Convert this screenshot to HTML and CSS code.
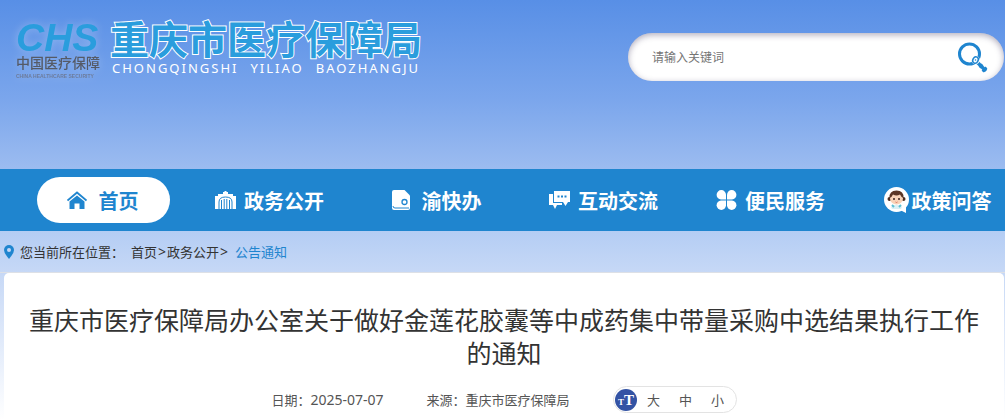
FILE: index.html
```html
<!DOCTYPE html>
<html lang="zh-CN">
<head>
    <meta charset="UTF-8">
    <meta name="viewport" content="width=device-width, initial-scale=1.0">
    <title>重庆市医疗保障局</title>
    <link rel="stylesheet" href="styles.css">
</head>
<body>
    <header class="header">
        <a class="logo" href="#">
            <span class="emblem">
                <span class="emblem-chs">CHS</span>
                <span class="emblem-cn">中国医疗保障</span>
                <span class="emblem-en">CHINA HEALTHCARE SECURITY</span>
            </span>
            <span class="site-name">
                <span class="site-cn">重庆市医疗保障局</span>
                <span class="site-en"><span>CHONGQINGSHI</span><span>YILIAO</span><span>BAOZHANGJU</span></span>
            </span>
        </a>
        <form class="search">
            <input class="search-input" type="text" placeholder="请输入关键词" aria-label="请输入关键词">
            <button class="search-btn" type="button" aria-label="搜索">
                <svg width="30" height="31" viewBox="0 0 30 31">
                    <circle cx="11.500" cy="12" r="10" fill="none" stroke="#1f85cf" stroke-width="3"/>
                    <path d="M19 20 L28 29" stroke="#1f85cf" stroke-width="3.500"/>
                    <path d="M21.500 25.500 l3 -3 M24.500 29.500 l4 -4" stroke="#1f85cf" stroke-width="2.500"/>
                    <circle cx="17.500" cy="18" r="4.300" fill="#fff"/>
                    <ellipse cx="17.500" cy="18" rx="2.600" ry="3.300" transform="rotate(30 17.500 18)" fill="#fff" stroke="#1f85cf" stroke-width="1.500"/>
                    <circle cx="17.500" cy="18" r="0.800" fill="#1f85cf"/>
                </svg>
            </button>
        </form>
    </header>

    <nav class="nav">
        <a class="nav-item active" href="#">
            <svg width="20" height="18" viewBox="0 0 20 18">
                <path d="M0.500 9.500 L10 1.500 L19.500 9.500" fill="none" stroke="currentColor" stroke-width="1.800"/>
                <path d="M2.500 10.500 L10 4.500 L17.500 10.500 V18 H12.500 V12.500 H7.500 V18 H2.500 Z" fill="currentColor"/>
            </svg>
            <span>首页</span>
        </a>
        <a class="nav-item" href="#">
            <svg width="21" height="18" viewBox="0 0 21 18">
                <path d="M0 5 H3 V3 H8 V1 H9.500 V0 H11.500 V1 H13 V3 H18 V5 H21 V18 H0 Z" fill="currentColor"/>
                <path d="M4 18 V11 Q4 6 10.500 6 Q17 6 17 11 V18" fill="none" stroke="#1f85cf"/>
                <path d="M6.500 18 V9 M9.200 18 V8 M11.800 18 V8 M14.500 18 V9" stroke="#1f85cf"/>
            </svg>
            <span>政务公开</span>
        </a>
        <a class="nav-item wide" href="#">
            <svg width="18" height="20" viewBox="0 0 18 20">
                <path d="M2 0 H12.500 L18 5.500 V18 Q18 20 16 20 H2 Q0 20 0 18 V2 Q0 0 2 0 Z" fill="currentColor"/>
                <path d="M1 16 Q1 18 3 18 H17" fill="none" stroke="#1f85cf"/>
                <circle cx="12.500" cy="12" r="2.500" fill="none" stroke="#1f85cf" stroke-width="1.300"/>
            </svg>
            <span>渝快办</span>
        </a>
        <a class="nav-item" href="#">
            <svg width="21" height="18" viewBox="0 0 21 18">
                <path d="M0 3 H4 V12 H13 V14 H8 L6 18 L4 14 H0 Z" fill="currentColor"/>
                <path d="M5 0 H21 V11 H19 L16.500 15 L14 11 H5 Z" fill="currentColor"/>
                <path d="M8.500 5.500 H10.500 M12 5.500 H14 M15.500 5.500 H17.500" stroke="#1f85cf" stroke-width="2"/>
            </svg>
            <span>互动交流</span>
        </a>
        <a class="nav-item" href="#">
            <svg width="21" height="20" viewBox="0 0 21 20" fill="currentColor">
                <path d="M10 9.500 H5 A4.700 4.700 0 1 1 10 4.700 Z"/>
                <path d="M11 9.500 H16 A4.700 4.700 0 1 0 11 4.700 Z"/>
                <path d="M10 10.500 H5 A4.700 4.700 0 1 0 10 15.300 Z"/>
                <path d="M11 10.500 H16 A4.700 4.700 0 1 1 11 15.300 Z"/>
            </svg>
            <span>便民服务</span>
        </a>
        <a class="nav-item tight" href="#">
            <svg width="25" height="26" viewBox="0 0 25 26">
                <circle cx="12.500" cy="12.500" r="12.500" fill="#fff"/>
                <path d="M16 23 L22 26 L22 19 Z" fill="#fff"/>
                <path d="M7 20 Q12.500 15 18 20 L17 22 H8 Z" fill="#d9f0f5"/>
                <path d="M8 18 L10 20 M17 18 L15 20" stroke="#5dbfd3" stroke-width="2"/>
                <circle cx="5.500" cy="12" r="2" fill="#4a2d20"/>
                <circle cx="19.500" cy="12" r="2" fill="#4a2d20"/>
                <ellipse cx="12.500" cy="11.500" rx="6.500" ry="6" fill="#f8d3b8"/>
                <path d="M5.500 11 Q5 3.500 12.500 3.500 Q20 3.500 19.500 11 Q17 10 16 7.500 Q12.500 9.500 9 7.500 Q8 10 5.500 11 Z" fill="#5a3524"/>
                <circle cx="10" cy="12" r="1" fill="#3a221c"/>
                <circle cx="15" cy="12" r="1" fill="#3a221c"/>
                <path d="M11.500 15 Q12.500 16 13.500 15" fill="none" stroke="#d8705e"/>
            </svg>
            <span>政策问答</span>
        </a>
    </nav>

    <div class="breadcrumb">
        <svg width="10" height="14" viewBox="0 0 10 14">
            <path d="M5 14 Q0 8 0 5 A5 5 0 0 1 10 5 Q10 8 5 14 Z" fill="#1f85cf"/>
            <circle cx="5" cy="5" r="2" fill="#c5d7f6"/>
        </svg>
        <span class="breadcrumb-label">您当前所在位置：</span>
        <span class="breadcrumb-path"><a href="#">首页</a><i>&gt;</i><a href="#">政务公开</a><i>&gt;</i></span>
        <a class="current" href="#">公告通知</a>
    </div>

    <main class="article">
        <h1>重庆市医疗保障局办公室关于做好金莲花胶囊等中成药集中带量采购中选结果执行工作的通知</h1>
        <div class="meta">
            <span>日期：<time>2025-07-07</time></span>
            <span>来源：重庆市医疗保障局</span>
            <div class="font-size">
                <svg width="22" height="22" viewBox="0 0 22 22">
                    <circle cx="11" cy="11" r="11" fill="#3353a4"/>
                    <text class="icon-t" x="3" y="16" font-size="9">T</text>
                    <text class="icon-t" x="9" y="16" font-size="15">T</text>
                </svg>
                <button type="button">大</button>
                <button type="button">中</button>
                <button type="button">小</button>
            </div>
        </div>
    </main>
</body>
</html>
```

FILE: styles.css
```css
* {
    box-sizing: border-box;
}
body {
    margin: 0;
    min-height: 100vh;
    display: flex;
    flex-direction: column;
    font-family: "Noto Sans", "Noto Sans CJK SC", sans-serif;
    font-size: 13px;
    color: #333;
    background: linear-gradient(#588fe6 0, #7ba6ec 100px, #9cbcf0 169px, #b4cdf4 231px, #c6d8f6 272px, #ffffff 420px);
}
a {
    color: inherit;
    text-decoration: none;
}
.header {
    display: flex;
    justify-content: space-between;
    align-items: flex-start;
    height: 169px;
    padding-left: 16px;
    padding-right: 1px;
}
.logo {
    display: flex;
    gap: 8px;
    padding-top: 16px;
}
.emblem {
    display: flex;
    flex-direction: column;
    width: 86px;
    padding-top: 6px;
    white-space: nowrap;
    filter: drop-shadow(0 0 4px rgba(255, 255, 255, 0.3));
}
.emblem-chs {
    font: italic bold 39px/31px "Liberation Sans", sans-serif;
    color: #2a9ddd;
}
.emblem-cn {
    font-size: 14px;
    font-weight: 500;
    line-height: 20px;
    color: #555a66;
}
.emblem-en {
    font: bold 5px/6px "Liberation Sans", sans-serif;
    color: #6d7c9c;
}
.site-name {
    display: flex;
    flex-direction: column;
}
.site-cn {
    font-size: 39px;
    font-weight: bold;
    line-height: 45px;
    color: #2a9ddd;
    -webkit-text-stroke: 2px #fff;
    paint-order: stroke fill;
}
.site-en {
    display: flex;
    justify-content: space-between;
    padding: 0 2px;
    font-size: 13px;
    line-height: 14px;
    letter-spacing: 2px;
    color: #fff;
}
.search {
    display: flex;
    align-items: center;
    width: 376px;
    height: 48px;
    margin-top: 33px;
    padding: 0 16px 0 24px;
    border-radius: 24px;
    background: #fff;
    box-shadow: inset 0 2px 6px rgba(60, 50, 90, 0.4);
}
.search-input {
    flex: 1;
    min-width: 0;
    padding: 0;
    border: none;
    outline: none;
    background: none;
    font-family: inherit;
    font-size: 12px;
}
.search-input::placeholder {
    color: #757575;
}
.search-btn {
    display: flex;
    padding: 0;
    border: none;
    background: none;
    cursor: pointer;
}
.nav {
    display: flex;
    align-items: center;
    gap: 34px;
    height: 62px;
    padding-left: 37px;
    background: #1f85cf;
}
.nav-item {
    flex: 1;
    display: flex;
    justify-content: center;
    align-items: center;
    gap: 8px;
    height: 46px;
    padding-right: 2px;
    border-radius: 23px;
    font-size: 20px;
    font-weight: bold;
    color: #fff;
    white-space: nowrap;
}
.nav-item.active {
    gap: 12px;
    background: #fff;
    color: #1f85cf;
}
.nav-item.wide {
    gap: 12px;
}
.nav-item.tight {
    gap: 3px;
}
.breadcrumb {
    display: flex;
    align-items: center;
    gap: 6px;
    height: 42px;
    padding-left: 4px;
    border-bottom: 1px solid #dde0e6;
}
.breadcrumb-label {
    margin-right: 1px;
}
.breadcrumb-path i {
    padding: 0 1px;
    font-size: 14px;
    font-style: normal;
}
.breadcrumb .current {
    color: #1f85cf;
}
.article {
    flex: 1;
    margin: 0 1px 0 4px;
    padding: 31px 20px 0;
    border-radius: 5px 5px 0 0;
    background: #fff;
}
.article h1 {
    margin: 0;
    font-size: 25px;
    font-weight: normal;
    line-height: 33px;
    text-align: center;
}
.meta {
    display: flex;
    justify-content: center;
    align-items: center;
    gap: 43px;
    margin-top: 16px;
    color: #555;
}
.meta time {
    font-size: 14px;
}
.font-size {
    display: flex;
    align-items: center;
    gap: 2px;
    height: 27px;
    padding: 0 3px 0 1px;
    border: 1px solid #e3e3e3;
    border-radius: 14px;
}
.font-size button {
    width: 30px;
    padding: 0;
    border: none;
    background: none;
    font-family: inherit;
    font-size: 13px;
    color: #555;
    cursor: pointer;
}
.icon-t {
    font-family: "Liberation Serif", serif;
    font-weight: bold;
    fill: #fff;
}
```
